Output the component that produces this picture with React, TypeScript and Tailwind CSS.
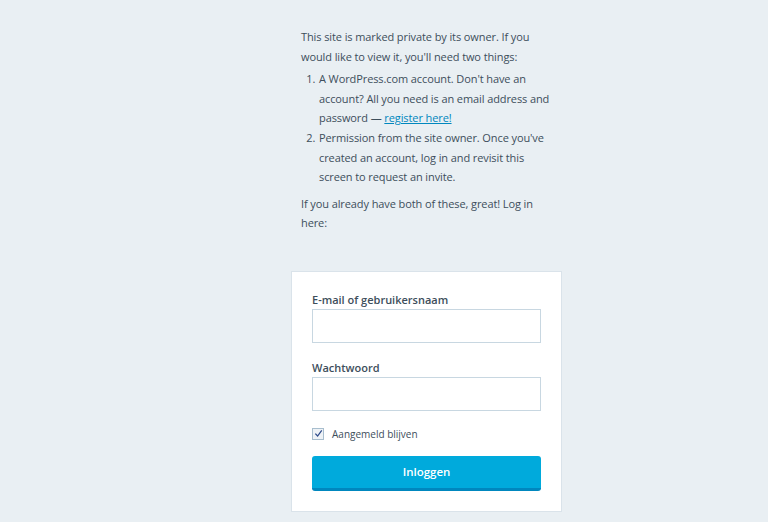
export default function App() {
  return (
    <div
      className="min-h-[522px] w-full bg-[#e9eff3] text-[#3d4e5b]"
      style={{ fontFamily: '"Open Sans", "Noto Sans", sans-serif' }}
    >
      <div className="ml-[291px] w-[271px] pt-[27px]">
        {/* Private notice */}
        <div className="px-[10px] text-[11px] leading-[19.6px] tracking-[-0.1px]">
          <p className="mb-[3px]">
            This site is marked private by its owner. If you would like to view it, you'll need two things:
          </p>
          <ol className="mb-[7px] list-decimal pl-[17px]">
            <li className="pl-[1px]">
              A WordPress.com account. Don't have an account? All you need is an email address and password —{" "}
              <a href="#" className="text-[#0087be] underline">
                register here!
              </a>
            </li>
            <li className="pl-[1px]">
              Permission from the site owner. Once you've created an account, log in and revisit this screen to request an invite.
            </li>
          </ol>
          <p>If you already have both of these, great! Log in here:</p>
        </div>

        {/* Login box */}
        <div className="mt-[38px] border border-[#dae3ea] bg-white px-[20px] pb-[20px] pt-[19px]">
          <label className="block text-[11px] font-semibold leading-[18px]">E-mail of gebruikersnaam</label>
          <div className="h-[34px] border border-[#c8d7e1] bg-white" />
          <label className="mt-[16px] block text-[11px] font-semibold leading-[18px]">Wachtwoord</label>
          <div className="h-[34px] border border-[#c8d7e1] bg-white" />
          <div className="mt-[16px] flex items-center gap-[8px]">
            <div className="flex h-[12px] w-[12px] items-center justify-center border border-[#a8bece] bg-[#eef2f6]">
              <svg width="9" height="9" viewBox="0 0 10 10">
                <path d="M1.5 5.2 L4 7.8 L8.6 1.5" fill="none" stroke="#2e4b8a" strokeWidth="1.4" />
              </svg>
            </div>
            <span className="text-[10px] leading-[14px]">Aangemeld blijven</span>
          </div>
          <button className="mt-[15px] h-[35px] w-full rounded-[3px] border-b-[3px] border-[#0087be] bg-[#00aadc] text-[11.5px] font-semibold text-white">
            Inloggen
          </button>
        </div>
      </div>
    </div>
  );
}
